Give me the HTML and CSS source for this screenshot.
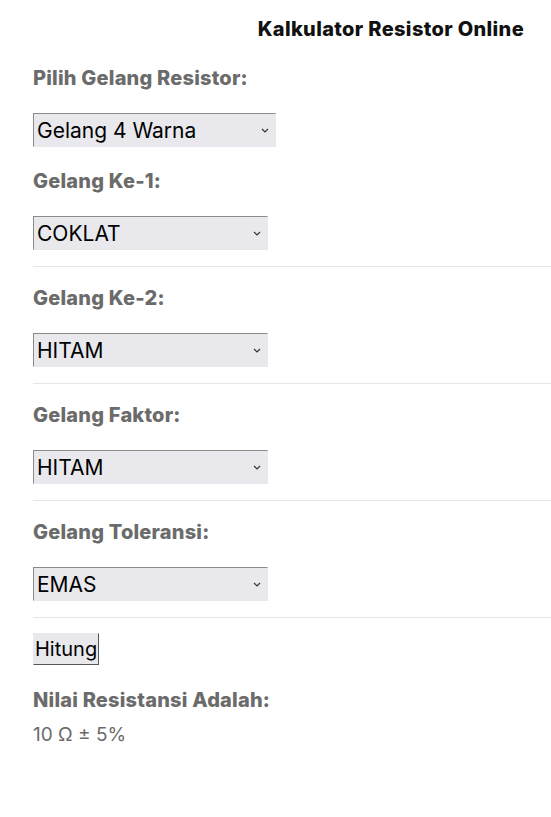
FILE: index.html
```
<!DOCTYPE html>
<html lang="id">
<head>
  <meta charset="UTF-8" />
  <meta name="viewport" content="width=device-width, initial-scale=1.0" />
  <title>Kalkulator Resistor Online</title>
  <link rel="stylesheet" href="styles.css">
</head>
<body>
  <div class="container">
    <h1>Kalkulator Resistor Online</h1>

    <div class="field first">
      <label for="tipe">Pilih Gelang Resistor:</label>
      <select id="tipe" class="wide">
        <option>Gelang 4 Warna</option>
        <option>Gelang 5 Warna</option>
      </select>
    </div>

    <div class="field">
      <label for="g1">Gelang Ke-1:</label>
      <select id="g1">
        <option>COKLAT</option>
      </select>
    </div>

    <div class="field">
      <label for="g2">Gelang Ke-2:</label>
      <select id="g2">
        <option>HITAM</option>
      </select>
    </div>

    <div class="field">
      <label for="faktor">Gelang Faktor:</label>
      <select id="faktor">
        <option>HITAM</option>
      </select>
    </div>

    <div class="field">
      <label for="toleransi">Gelang Toleransi:</label>
      <select id="toleransi">
        <option>EMAS</option>
      </select>
    </div>

    <button type="button">Hitung</button>

    <div class="result">
      <div class="result-label">Nilai Resistansi Adalah:</div>
      <div class="result-value">10 Ω ± 5%</div>
    </div>
  </div>
</body>
</html>
```

FILE: styles.css
```
body {
  margin: 0;
  font-family: 'Inter', 'Noto Sans', sans-serif;
  background: #ffffff;
  color: #666666;
}

.container {
  padding: 14px 0 40px 33px;
}

h1 {
  margin: 0;
  padding-right: 27px;
  text-align: right;
  font-size: 20px;
  line-height: 30px;
  font-weight: 800;
  letter-spacing: 0.35px;
  color: #111111;
}

label,
.result-label {
  display: block;
  font-size: 20px;
  line-height: 30px;
  font-weight: 800;
  letter-spacing: 0.2px;
  color: #6b6b6b;
}

.field {
  padding-top: 16px;
  padding-bottom: 16px;
  border-bottom: 1px solid #e6e6e6;
}

.field.first {
  padding-top: 19px;
  padding-bottom: 3px;
  border-bottom: none;
}

.field label {
  margin-bottom: 20px;
}

select {
  display: block;
  width: 235px;
  height: 34px;
  padding: 0 20px 0 0;
  font-family: inherit;
  font-size: 21px;
  color: #000000;
  background: #e9e9ed url("data:image/svg+xml,%3Csvg xmlns='http://www.w3.org/2000/svg' width='8' height='5' viewBox='0 0 8 5'%3E%3Cpath d='M1 1l3 3 3-3' fill='none' stroke='%23333' stroke-width='1.2'/%3E%3C/svg%3E") no-repeat right 6px center;
  border: 1px solid #e9e9ed;
  border-top-color: #8a8a8a;
  border-left-color: #8a8a8a;
  border-radius: 0;
  -webkit-appearance: none;
  appearance: none;
  text-indent: 3px;
}

select.wide {
  width: 243px;
}

button {
  display: block;
  margin-top: 15px;
  height: 32px;
  padding: 0 1px;
  font-family: inherit;
  font-size: 20px;
  color: #000000;
  background: #e9e9ed;
  border: 1px solid #e9e9ed;
  border-right-color: #555555;
  border-bottom-color: #555555;
  border-radius: 0;
}

.result {
  margin-top: 20px;
}

.result-label {
  margin-bottom: 5px;
}

.result-value {
  font-size: 19px;
  line-height: 30px;
  color: #6b6b6b;
}
```
